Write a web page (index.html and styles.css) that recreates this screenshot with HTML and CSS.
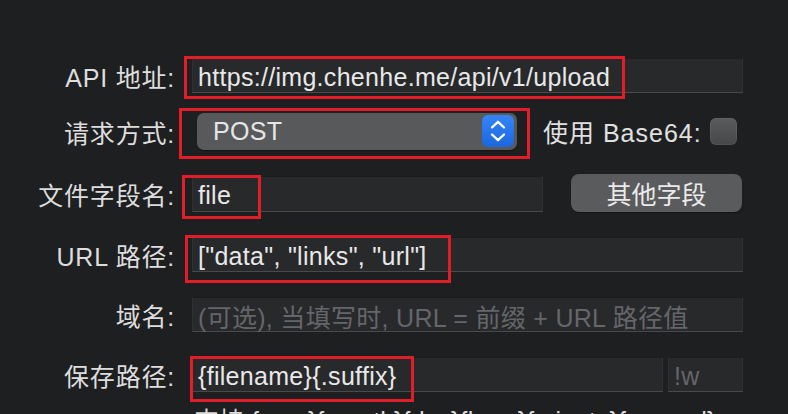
FILE: index.html
```html
<!DOCTYPE html>
<html lang="zh">
<head>
<meta charset="utf-8">
<title>Upload settings</title>
<link rel="stylesheet" href="styles.css">
</head>
<body>
<div class="form">
  <div class="row r1">
    <div class="label">API 地址:</div>
    <div class="ctrl">
      <div class="field full"><span class="val">https://img.chenhe.me/api/v1/upload</span><span class="mark m1"></span></div>
    </div>
  </div>
  <div class="row r2">
    <div class="label">请求方式:</div>
    <div class="ctrl">
      <div class="popup">
        <span class="val">POST</span>
        <span class="stepper"><svg width="32" height="32" viewBox="0 0 32 32"><path d="M10 12.5 L16 6.8 L22 12.5 M10 19.5 L16 25.2 L22 19.5" fill="none" stroke="#fff" stroke-width="2.3" stroke-linecap="round" stroke-linejoin="round"/></svg></span>
        <span class="mark m2"></span>
      </div>
      <div class="check-label">使用 Base64:</div>
      <span class="checkbox"></span>
    </div>
  </div>
  <div class="row r3">
    <div class="label">文件字段名:</div>
    <div class="ctrl">
      <div class="field short"><span class="val">file</span><span class="mark m3"></span></div>
      <button class="btn">其他字段</button>
    </div>
  </div>
  <div class="row r4">
    <div class="label">URL 路径:</div>
    <div class="ctrl">
      <div class="field full"><span class="val">["data", "links", "url"]</span><span class="mark m4"></span></div>
    </div>
  </div>
  <div class="row r5">
    <div class="label">域名:</div>
    <div class="ctrl">
      <div class="field full"><span class="val ph">(可选), 当填写时, URL = 前缀 + URL 路径值</span></div>
    </div>
  </div>
  <div class="row r6">
    <div class="label">保存路径:</div>
    <div class="ctrl">
      <div class="field path"><span class="val">{filename}{.suffix}</span><span class="mark m6"></span></div>
      <div class="field suffix"><span class="val ph">!w</span></div>
    </div>
  </div>
  <div class="hint">支持 {year}{month}{day}{hour}{minute}{second}</div>
</div>
</body>
</html>
```
FILE: styles.css
```css
html, body {
  margin: 0;
  padding: 0;
  background: #1e1f21;
  overflow: hidden;
  width: 788px;
  height: 414px;
}
body {
  font-family: "Liberation Sans", "Noto Sans CJK SC", sans-serif;
  font-size: 25px;
  color: #dcdcdc;
}
.form {
  padding: 57px 45px 0 0;
  display: flex;
  flex-direction: column;
}
.row {
  display: grid;
  grid-template-columns: 175px 1fr;
  column-gap: 17px;
  align-items: center;
}
.r1 { height: 35px; }
.r2 { height: 38px; margin-top: 20px; }
.r3 { height: 38px; margin-top: 24px; }
.r4 { height: 36px; margin-top: 24px; }
.r5 { height: 36px; margin-top: 24px; }
.r6 { height: 36px; margin-top: 24px; }
.label {
  text-align: right;
  white-space: nowrap;
  color: #dddddd;
  letter-spacing: 0.8px;
  padding-top: 1px;
}
.ctrl {
  display: flex;
  align-items: center;
  height: 100%;
}
.field {
  position: relative;
  box-sizing: border-box;
  height: 35px;
  background: #28292b;
  border: 1px solid #2f3032;
  border-top-color: #1b1c1e;
  border-bottom-color: #48494b;
  display: flex;
  align-items: center;
  padding-left: 5px;
  padding-top: 3px;
  white-space: nowrap;
}
.full { width: 551px; }
.short { width: 351px; align-self: flex-end; height: 36px; }
.path { width: 471px; }
.suffix { width: 75px; margin-left: 5px; }
.val {
  color: #e8e8e8;
  letter-spacing: 0.3px;
}
.ph { color: #65666a; }
.mark {
  position: absolute;
  box-sizing: border-box;
  border: 3px solid #e21d2a;
  pointer-events: none;
}
.m1 { left: -9px; top: -3px; width: 441px; height: 43px; }
.m2 { left: -18px; top: -5px; width: 351px; height: 51px; }
.m3 { left: -11px; top: -2px; width: 79px; height: 44px; }
.m4 { left: -8px; top: -3px; width: 266px; height: 48px; }
.m6 { left: -3px; top: -2px; width: 224px; height: 46px; }
.popup {
  position: relative;
  box-sizing: border-box;
  margin-left: 5px;
  width: 320px;
  height: 37px;
  border-radius: 7px;
  background: #58595b;
  box-shadow: 0 1px 1px rgba(0,0,0,0.35);
  display: flex;
  align-items: center;
  padding-left: 16px;
}
.popup .val { color: #e6e6e6; flex: 1; }
.stepper {
  width: 32px;
  height: 32px;
  margin-right: 3px;
  border-radius: 6px;
  background: linear-gradient(#3585f7, #1b67de);
  display: flex;
}
.check-label {
  margin-left: 26px;
  color: #e0e0e0;
  letter-spacing: 1px;
  white-space: nowrap;
}
.checkbox {
  margin-left: 8px;
  width: 27px;
  height: 27px;
  border-radius: 6px;
  background: linear-gradient(#5a5b5d, #464749);
  box-shadow: inset 0 0 0 1px rgba(255,255,255,0.06);
}
.btn {
  margin-left: 28px;
  width: 171px;
  height: 38px;
  border: none;
  border-radius: 8px;
  background: #5a5b5d;
  color: #eaeaea;
  font-family: "Noto Sans CJK SC", sans-serif;
  font-size: 25px;
  line-height: 1;
  padding: 0;
  box-shadow: 0 1px 1px rgba(0,0,0,0.35);
}
.hint {
  margin-top: 9px;
  margin-left: 194px;
  white-space: nowrap;
  color: #dcdcdc;
}
```
